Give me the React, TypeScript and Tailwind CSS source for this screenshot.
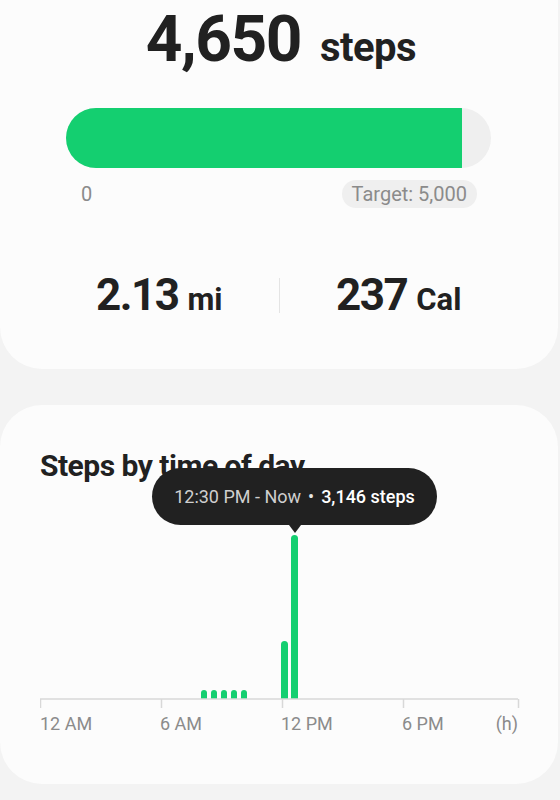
import clsx from "clsx";

const GREEN = "#14cf70";

type Bar = { x: number; w: number; top: number };

const bars: Bar[] = [
    { x: 161, w: 6, top: 209 },
    { x: 171, w: 6, top: 209 },
    { x: 181, w: 6, top: 209 },
    { x: 191, w: 6, top: 209 },
    { x: 201, w: 6, top: 209 },
    { x: 241, w: 7, top: 160 },
    { x: 251, w: 7, top: 54 },
];

const AXIS_Y = 218;

// bar with a rounded top and a flat foot on the axis
const barPath = ({ x, w, top }: Bar) => {
    const r = w / 2;
    return `M${x} ${AXIS_Y} V${top + r} A${r} ${r} 0 0 1 ${x + w} ${top + r} V${AXIS_Y} Z`;
};

const ticks = [0, 121, 242, 363, 478];
const labels = [
    { x: 0, text: "12 AM", anchor: "start" },
    { x: 120, text: "6 AM", anchor: "start" },
    { x: 241, text: "12 PM", anchor: "start" },
    { x: 362, text: "6 PM", anchor: "start" },
    { x: 478, text: "(h)", anchor: "end" },
];

export default function App() {
    return (
        <div className="min-h-[800px] bg-[#f3f3f3] pr-[2px] text-[#212121] font-['Roboto',sans-serif]">
            <SummaryCard />
            <div className="h-[36px]" />
            <HourlyCard />
        </div>
    );
}

function SummaryCard() {
    return (
        <div className="rounded-b-[42px] bg-[#fcfcfc] px-10 pt-[8px] pb-[52px]">
            <div className="flex items-baseline justify-center gap-[19px] pl-[4px]">
                <span className="text-[64px] leading-none font-bold tracking-[-1.5px]">4,650</span>
                <span className="text-[40px] leading-none font-bold tracking-[-0.5px]">steps</span>
            </div>

            <div className="ml-[26px] mr-[27px] mt-[36px] h-[60px] overflow-hidden rounded-full bg-[#efefef]">
                <div className="h-full" style={{ width: `${(398 / 427) * 100}%`, backgroundColor: GREEN }} />
            </div>

            <div className="ml-[26px] mr-[41px] mt-[11px] flex items-center justify-between text-[20px] text-[#8b8b8b]">
                <span className="pl-[15px]">0</span>
                <span className="rounded-full bg-[#efefef] px-[10px] py-[2px] leading-[24px]">Target: 5,000</span>
            </div>

            <div className="mt-[64px] flex items-center">
                <Stat value="2.13" unit="mi" />
                <div className="h-[35px] w-px bg-[#e4e4e4]" />
                <Stat value="237" unit="Cal" />
            </div>
        </div>
    );
}

const Stat = ({ value, unit }: { value: string; unit: string }) => (
    <div className="flex flex-1 items-baseline justify-center gap-[9px]">
        <span className="text-[44px] leading-none font-bold tracking-[-1.5px]">{value}</span>
        <span className="text-[31px] leading-none font-bold">{unit}</span>
    </div>
);

function HourlyCard() {
    return (
        <div className="rounded-[42px] bg-[#fcfcfc] px-10 pt-[46px] pb-[42px]">
            <h2 className="text-[30px] leading-none font-bold tracking-[-0.5px]">Steps by time of day</h2>
            <div className="relative h-[261px]">
                <svg width={480} height={261} className="block">
                    {bars.map((b, i) => (
                        <path key={i} d={barPath(b)} fill={GREEN} />
                    ))}
                    <line x1={0} y1={AXIS_Y} x2={478} y2={AXIS_Y} stroke="#d8d8d8" strokeWidth={1.5} />
                    {ticks.map(x => (
                        <line key={x} x1={x + 0.5} y1={AXIS_Y} x2={x + 0.5} y2={AXIS_Y + 9} stroke="#d8d8d8" strokeWidth={1.5} />
                    ))}
                    {labels.map(l => (
                        <text
                            key={l.text}
                            x={l.x}
                            y={249}
                            textAnchor={l.anchor}
                            fontFamily="Roboto, sans-serif"
                            fontSize={18}
                            fill="#8b8b8b"
                        >
                            {l.text}
                        </text>
                    ))}
                </svg>
                <Tooltip />
            </div>
        </div>
    );
}

const Tooltip = () => (
    <div className="absolute left-[112px] top-[-13px] flex flex-col items-center">
        <div
            className={clsx(
                "flex h-[57px] w-[285px] items-center justify-center rounded-full",
                "bg-[#212121] text-[18px] whitespace-nowrap",
            )}
        >
            <span className="text-[#cfcfcf]">12:30 PM - Now</span>
            <span className="mx-[7px] text-[#e6e6e6]">•</span>
            <span className="font-medium text-white">3,146 steps</span>
        </div>
        <div className="h-0 w-0 border-x-[6px] border-t-[8px] border-x-transparent border-t-[#212121]" />
    </div>
);
